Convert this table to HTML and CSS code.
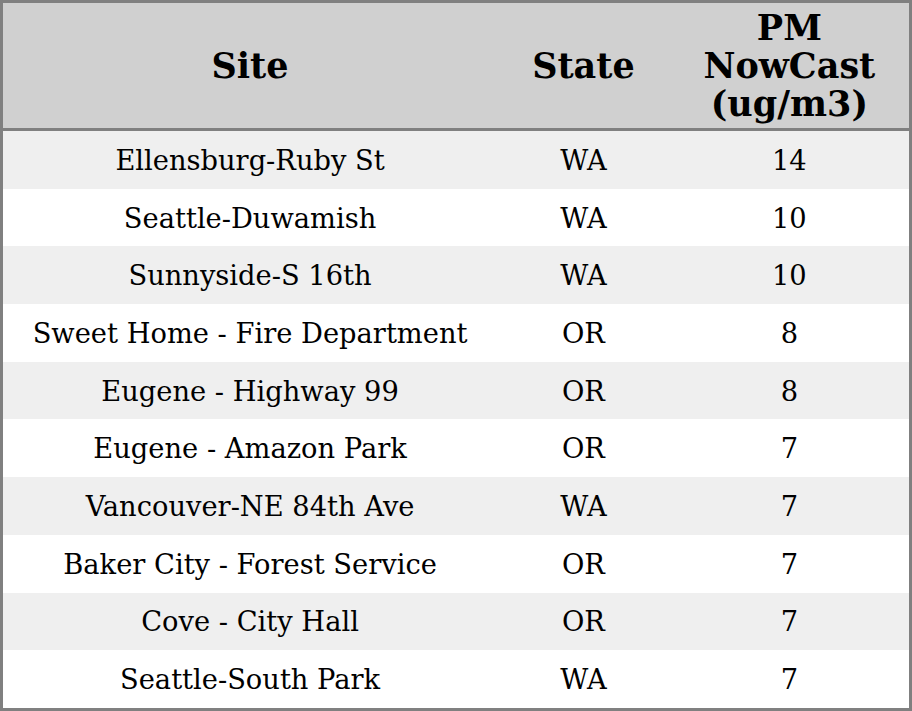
FILE: index.html
```html
<!DOCTYPE html>
<html>
<head>
<meta charset="utf-8">
<link rel="stylesheet" href="styles.css">
</head>
<body>
<table class="aq">
  <colgroup>
    <col class="c-site">
    <col class="c-state">
    <col class="c-pm">
  </colgroup>
  <thead>
    <tr>
      <th>Site</th>
      <th>State</th>
      <th>PM<br>NowCast<br>(ug/m3)</th>
    </tr>
  </thead>
  <tbody>
    <tr><td>Ellensburg-Ruby St</td><td>WA</td><td>14</td></tr>
    <tr><td>Seattle-Duwamish</td><td>WA</td><td>10</td></tr>
    <tr><td>Sunnyside-S 16th</td><td>WA</td><td>10</td></tr>
    <tr><td>Sweet Home - Fire Department</td><td>OR</td><td>8</td></tr>
    <tr><td>Eugene - Highway 99</td><td>OR</td><td>8</td></tr>
    <tr><td>Eugene - Amazon Park</td><td>OR</td><td>7</td></tr>
    <tr><td>Vancouver-NE 84th Ave</td><td>WA</td><td>7</td></tr>
    <tr><td>Baker City - Forest Service</td><td>OR</td><td>7</td></tr>
    <tr><td>Cove - City Hall</td><td>OR</td><td>7</td></tr>
    <tr><td>Seattle-South Park</td><td>WA</td><td>7</td></tr>
  </tbody>
</table>
</body>
</html>
```
FILE: styles.css
```css
html, body {
  margin: 0;
  padding: 0;
  background: #ffffff;
}
.aq {
  width: 912px;
  border-collapse: collapse;
  border: 3px solid #808080;
  font-family: "DejaVu Serif", serif;
  color: #000;
  table-layout: fixed;
}
.c-site { width: 494px; }
.c-state { width: 172px; }
.c-pm { width: 240px; }
.aq thead th {
  background: #d0d0d0;
  font-weight: bold;
  font-size: 35px;
  line-height: 38px;
  height: 124px;
  padding: 1px 0 0;
  text-align: center;
  vertical-align: middle;
  border-bottom: 3px solid #808080;
}
.aq tbody td {
  font-size: 27.3px;
  height: 55.7px;
  padding: 2px 0 0;
  text-align: center;
  vertical-align: middle;
  line-height: 30px;
}
.aq tbody tr:nth-child(odd) td {
  background: #efefef;
}
```
